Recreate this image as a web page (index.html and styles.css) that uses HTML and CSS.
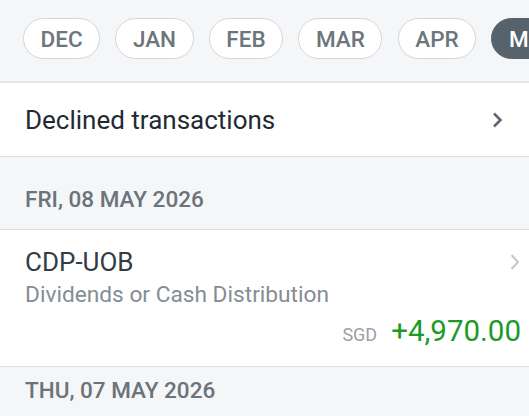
FILE: index.html
```html
<!DOCTYPE html>
<html lang="en">
<head>
    <meta charset="UTF-8">
    <meta name="viewport" content="width=device-width, initial-scale=1.0">
    <title>Transactions</title>
    <link rel="stylesheet" href="styles.css">
</head>
<body>
    <div class="months">
        <span class="pill">DEC</span>
        <span class="pill">JAN</span>
        <span class="pill">FEB</span>
        <span class="pill">MAR</span>
        <span class="pill">APR</span>
        <span class="pill active">MAY</span>
    </div>
    <div class="row declined">
        <span>Declined transactions</span>
        <svg class="chev" width="12" height="16" viewBox="0 0 12 16"><path d="M3 1.5 L9.5 8 L3 14.5" fill="none" stroke="#5f6872" stroke-width="2.6"/></svg>
    </div>
    <div class="day">FRI, 08 MAY 2026</div>
    <div class="txn">
        <div class="txn-top">
            <div class="txn-name">CDP-UOB</div>
            <svg class="chev light" width="12" height="18" viewBox="0 0 12 18"><path d="M2.5 2 L9 9 L2.5 16" fill="none" stroke="#c4c8cc" stroke-width="2"/></svg>
        </div>
        <div class="txn-desc">Dividends or Cash Distribution</div>
        <div class="txn-amount"><span class="cur">SGD</span><span class="val">+4,970.00</span></div>
    </div>
    <div class="day last">THU, 07 MAY 2026</div>
</body>
</html>
```

FILE: styles.css
```css
* {
    margin: 0;
    padding: 0;
    box-sizing: border-box;
}
body {
    width: 529px;
    height: 416px;
    overflow: hidden;
    background: #f4f6f8;
    font-family: Roboto, "Liberation Sans", sans-serif;
}
.months {
    display: flex;
    gap: 15.3px;
    padding: 18px 0 0 23px;
    height: 83px;
    border-bottom: 2px solid #e3e7ea;
    white-space: nowrap;
    overflow: hidden;
}
.pill {
    flex: none;
    height: 41px;
    padding: 0 16.5px;
    border: 1.5px solid #d2d6da;
    border-radius: 21px;
    background: #fff;
    color: #6d757d;
    font-size: 22.5px;
    font-weight: 500;
    line-height: 40px;
}
.pill.active {
    background: #56636d;
    border-color: #56636d;
    color: #fff;
}
.row {
    display: flex;
    align-items: center;
    justify-content: space-between;
    background: #fff;
}
.declined {
    height: 74px;
    padding: 0 26px 0 25px;
    border-bottom: 1px solid #dde1e4;
    color: #1f2a33;
    font-size: 26px;
}
.day {
    height: 73px;
    padding: 29px 25px 0;
    color: #6b737b;
    font-size: 22.5px;
    font-weight: 500;
    border-bottom: 1px solid #dde1e4;
}
.day.last {
    height: 49px;
    padding-top: 10px;
    border-bottom: none;
}
.txn {
    background: #fff;
    padding: 14px 8px 10px 25px;
    height: 137px;
    border-bottom: 1px solid #dde1e4;
}
.txn-top {
    display: flex;
    justify-content: space-between;
    align-items: center;
}
.txn-name {
    color: #333c44;
    font-size: 26px;
    line-height: 36px;
}
.txn-desc {
    color: #858d94;
    font-size: 22.7px;
    line-height: 30px;
}
.txn-amount {
    display: flex;
    justify-content: flex-end;
    align-items: baseline;
    gap: 14px;
    margin-top: 4px;
}
.cur {
    color: #9aa0a6;
    font-size: 18px;
}
.val {
    color: #1b9a28;
    font-size: 29.5px;
}
```
